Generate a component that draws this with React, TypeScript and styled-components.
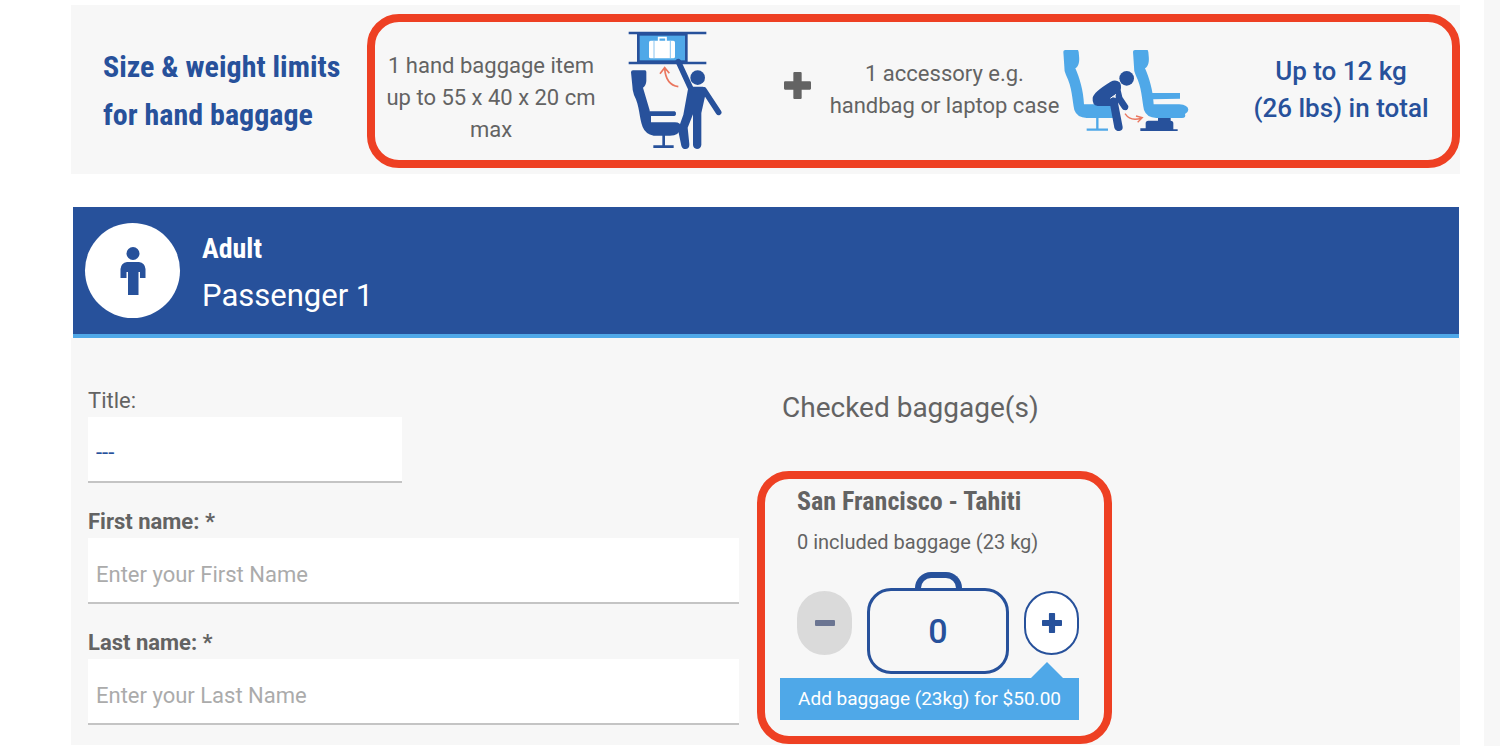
import React, { useState } from "react";
import styled, { createGlobalStyle } from "styled-components";

const blue = "#27519b";
const sky = "#4fa8e8";
const red = "#ee4023";
const grey = "#636363";
const panel = "#f7f7f7";
const display = `"Roboto Condensed", "Liberation Sans Narrow", "DejaVu Sans Condensed", sans-serif`;

const GlobalStyle = createGlobalStyle`
  *, *::before, *::after { box-sizing: border-box; }
  body { margin: 0; background: #fff; color: ${grey}; font-family: Roboto, "Liberation Sans", sans-serif; font-size: 22px; line-height: 32px; }
  h1, h2, h3, p { margin: 0; font-weight: 400; }
  button, input, select { font: inherit; }
`;

const Page = styled.main`
  min-height: 100vh;
  padding: 5px 24px 0 71px;
  border-right: 16px solid ${panel};
`;

const Banner = styled.section`
  display: flex;
  align-items: center;
  padding: 9px 0 6px 32px;
  background: ${panel};
`;

const BannerTitle = styled.h1`
  flex: 0 0 264px;
  font: 700 30px/48px ${display};
  color: ${blue};
`;

const Highlight = styled.div`
  border: 8px solid ${red};
  border-radius: 32px;
`;

const Limits = styled(Highlight)`
  flex: 1;
  display: flex;
  align-items: center;
  justify-content: space-between;
  height: 154px;
  padding-right: 19px;
`;

const Allowance = styled.div`
  display: flex;
  align-items: center;
`;

const ItemText = styled.p`
  width: 232px;
  margin-right: 20px;
  padding-top: 14px;
  text-align: center;
`;

const AccessoryText = styled.p`
  width: 236px;
  margin-left: 16px;
  padding-bottom: 3px;
  text-align: center;
`;

const Joiner = styled.span`
  display: flex;
  padding-bottom: 12px;
`;

const Total = styled.p`
  width: 184px;
  padding-bottom: 2px;
  font-size: 26px;
  font-weight: 500;
  line-height: 37px;
  text-align: center;
  color: ${blue};
`;

const PassengerHeader = styled.header`
  display: flex;
  align-items: center;
  gap: 22px;
  margin: 33px 1px 0 2px;
  padding: 16px 12px;
  border-bottom: 4px solid ${sky};
  background: ${blue};
  color: #fff;
`;

const Avatar = styled.div`
  display: grid;
  place-items: center;
  width: 95px;
  height: 95px;
  border-radius: 50%;
  background: #fff;
`;

const PassengerInfo = styled.div`
  height: 95px;
  padding-top: 3px;
`;

const PassengerType = styled.h2`
  font: 700 28px/46px ${display};
`;

const PassengerName = styled.p`
  font-size: 31px;
  line-height: 48px;
`;

const PassengerBody = styled.section`
  display: grid;
  grid-template-columns: 651fr 703fr;
  gap: 18px;
  padding: 0 0 1px 17px;
  background: ${panel};
`;

const Form = styled.form`
  display: flex;
  flex-direction: column;
  gap: 23px;
  padding-top: 47px;
`;

const Field = styled.div`
  display: flex;
  flex-direction: column;
`;

const Label = styled.label<{ $required?: boolean }>`
  font-weight: ${(p) => (p.$required ? 700 : 400)};
`;

const TextInput = styled.input`
  width: 100%;
  height: 66px;
  padding: 8px 8px 0;
  border: 0;
  border-bottom: 2px solid #c4c4c4;
  border-radius: 0;
  background: #fff;
  color: ${blue};
  &::placeholder { color: #ababab; opacity: 1; }
`;

const TitleSelect = styled.select`
  width: 314px;
  height: 66px;
  padding: 8px 8px 0;
  border: 0;
  border-bottom: 2px solid #c4c4c4;
  border-radius: 0;
  background: #fff;
  color: ${blue};
  appearance: none;
`;

const Baggage = styled.section`
  padding-top: 48px;
`;

const BaggageTitle = styled.h2`
  padding-left: 25px;
  font-size: 28px;
  line-height: 44px;
`;

const Leg = styled(Highlight)`
  width: 355px;
  margin-top: 41px;
  padding: 4px 25px 16px 15px;
`;

const LegTitle = styled.h3`
  padding-left: 17px;
  font: 700 26px/36px ${display};
`;

const LegNote = styled.p`
  padding: 7px 0 0 17px;
  font-size: 20px;
`;

const Stepper = styled.div`
  display: flex;
  align-items: flex-end;
  justify-content: space-between;
  padding: 14px 0 4px 17px;
`;

const RoundButton = styled.button`
  display: grid;
  place-items: center;
  width: 55px;
  height: 64px;
  margin-bottom: 19px;
  padding: 0;
  border: 2px solid ${blue};
  border-radius: 28px;
  background: #fff;
  color: ${blue};
  &:disabled { border-color: #dadada; background: #dadada; color: #6b7592; }
`;

const Suitcase = styled.div`
  display: flex;
  flex-direction: column;
  align-items: center;
`;

const Handle = styled.div`
  width: 47px;
  height: 16px;
  border: 6px solid ${blue};
  border-bottom: 0;
  border-radius: 22px 22px 0 0;
`;

const Count = styled.output`
  display: grid;
  place-items: center;
  width: 142px;
  height: 86px;
  border: 3px solid ${blue};
  border-radius: 24px;
  font-size: 34px;
  font-weight: 500;
  color: ${blue};
`;

const Price = styled.p`
  position: relative;
  padding: 5px 0;
  background: ${sky};
  color: #fff;
  font-size: 19px;
  text-align: center;
  &::before {
    content: "";
    position: absolute;
    right: 16px;
    bottom: 100%;
    border: 16px solid transparent;
    border-top: 0;
    border-bottom-color: ${sky};
  }
`;

const OverheadIcon = () => (
  <svg width="96" height="122" viewBox="36 27 288 366" fill="none" aria-hidden="true">
    <rect x="70" y="40" width="144" height="82" fill={sky} stroke={blue} strokeWidth="8" />
    <path d="M41 36H274M41 126H274" stroke={blue} strokeWidth="8" />
    <path d="M131 60V50H153V60" stroke="#fff" strokeWidth="5" />
    <rect x="102" y="59" width="78" height="53" rx="5" fill="#fff" />
    <path d="M117 60V111M166 60V111" stroke={sky} strokeWidth="2" />
    <path d="M190 197C164 193 151 172 149 142M135 158L149 140L163 157" stroke="#ea765e" strokeWidth="5" />
    <path d="M48 154Q48 148 54 148H90Q94 148 94 153V180Q93 194 84 200L104 268V271H179Q184 273 183 280Q182 285 178 285H108V304H180Q197 304 199 320Q192 344 165 344H116Q91 339 83 318C72 289 75 257 57 222Q52 207 52 194Z" fill={blue} />
    <path d="M146 340V376M115 377H176" stroke={blue} strokeWidth="8" />
    <circle cx="248" cy="170" r="22" fill={blue} />
    <path d="M190 122L226 200M267 207L311 274" stroke={blue} strokeWidth="17" strokeLinecap="round" />
    <path d="M220 199Q225 196 235 197H264Q274 200 273 213L259 276V372Q257 384 246 384Q235 383 234 372V280L218 320L223 369Q224 382 213 384Q202 385 199 374L189 326L205 281Z" fill={blue} />
  </svg>
);

const seat = (
  <path d="M37 32Q37 27 43 27H81Q84 32 84 44C86 60 84 75 73 82C86 111 97 148 99 190H176Q202 192 203 206Q202 215 193 219Q197 231 184 231H107Q78 230 70 207C63 175 64 140 45 102Q39 88 40 77Z" fill={sky} />
);

const UnderSeatIcon = () => (
  <svg width="126" height="84" viewBox="36 24 378 252" fill="none" aria-hidden="true">
    {seat}
    <path d="M139 228V265M107 266H171" stroke={sky} strokeWidth="7" />
    <g transform="translate(209 0)">
      {seat}
      <path d="M88 156H178V173L94 175Z" fill={sky} />
    </g>
    <circle cx="227" cy="112" r="22" fill={blue} />
    <path d="M125 170Q128 153 179 122Q194 114 206 124Q212 132 209 147L214 168L232 195Q233 207 223 208Q215 208 212 201L194 174V162L181 169Q195 167 200 180L215 258Q216 269 205 270Q193 270 190 260L178 195H140Q123 193 125 170Z" fill={blue} />
    <path d="M178 172L195 160" stroke={panel} strokeWidth="3" />
    <path d="M222 218Q239 243 272 231M255 225L274 230L260 244" stroke="#ea765e" strokeWidth="4" />
    <path d="M321 231H359V239Q367 239 367 247V265H380V270H268V262H284V247Q284 239 292 239H321Z" fill={blue} />
  </svg>
);

const PlusMark = ({ size }: { size: number }) => (
  <svg width={size} height={size} viewBox="0 0 26 26" fill="currentColor" aria-hidden="true">
    <path d="M9 1Q9 0 10 0H16Q17 0 17 1V9H25Q26 9 26 10V16Q26 17 25 17H17V25Q17 26 16 26H10Q9 26 9 25V17H1Q0 17 0 16V10Q0 9 1 9H9Z" />
  </svg>
);

const MinusMark = () => (
  <svg width="20" height="6" viewBox="0 0 20 6" aria-hidden="true">
    <rect width="20" height="6" rx="1" fill="currentColor" />
  </svg>
);

const AdultIcon = () => (
  <svg width="26" height="48" viewBox="0 0 52 96" fill={blue} aria-hidden="true">
    <circle cx="26" cy="13" r="13" />
    <path d="M14 30H38Q50 32 51 44V62H40V50H37V96H16V50H13V62H1V44Q2 32 14 30Z" />
  </svg>
);

export default function App() {
  const [bags, setBags] = useState(0);
  return (
    <>
      <GlobalStyle />
      <Page>
        <Banner>
          <BannerTitle>Size &amp; weight limits<br />for hand baggage</BannerTitle>
          <Limits>
            <Allowance>
              <ItemText>1 hand baggage item up to 55 x 40 x 20 cm max</ItemText>
              <OverheadIcon />
            </Allowance>
            <Allowance>
              <Joiner><PlusMark size={27} /></Joiner>
              <AccessoryText>1 accessory e.g. handbag or laptop case</AccessoryText>
              <UnderSeatIcon />
            </Allowance>
            <Total>Up to 12 kg<br />(26 lbs) in total</Total>
          </Limits>
        </Banner>

        <PassengerHeader>
          <Avatar><AdultIcon /></Avatar>
          <PassengerInfo>
            <PassengerType>Adult</PassengerType>
            <PassengerName>Passenger 1</PassengerName>
          </PassengerInfo>
        </PassengerHeader>

        <PassengerBody>
          <Form>
            <Field>
              <Label htmlFor="title">Title:</Label>
              <TitleSelect id="title">
                <option>---</option>
                <option>Mr</option>
                <option>Mrs</option>
              </TitleSelect>
            </Field>
            <Field>
              <Label htmlFor="first" $required>First name: *</Label>
              <TextInput id="first" placeholder="Enter your First Name" />
            </Field>
            <Field>
              <Label htmlFor="last" $required>Last name: *</Label>
              <TextInput id="last" placeholder="Enter your Last Name" />
            </Field>
          </Form>

          <Baggage>
            <BaggageTitle>Checked baggage(s)</BaggageTitle>
            <Leg>
              <LegTitle>San Francisco - Tahiti</LegTitle>
              <LegNote>0 included baggage (23 kg)</LegNote>
              <Stepper>
                <RoundButton type="button" aria-label="Remove baggage" disabled={bags === 0} onClick={() => setBags(bags - 1)}>
                  <MinusMark />
                </RoundButton>
                <Suitcase>
                  <Handle />
                  <Count>{bags}</Count>
                </Suitcase>
                <RoundButton type="button" aria-label="Add baggage" onClick={() => setBags(bags + 1)}>
                  <PlusMark size={20} />
                </RoundButton>
              </Stepper>
              <Price>Add baggage (23kg) for $50.00</Price>
            </Leg>
          </Baggage>
        </PassengerBody>
      </Page>
    </>
  );
}
